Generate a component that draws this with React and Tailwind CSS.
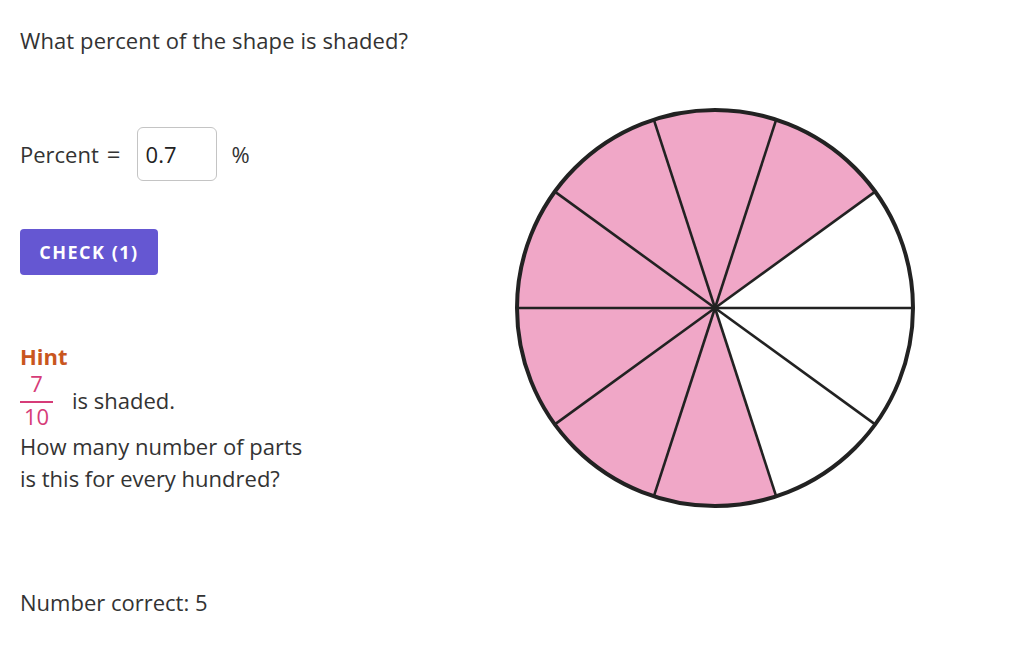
import React from 'react'

const CX = 202
const CY = 202
const R = 198

function pt(deg) {
  const a = (deg * Math.PI) / 180
  return [CX + R * Math.cos(a), CY - R * Math.sin(a)]
}

function Pie({ parts = 10, shaded = [1, 2, 3, 4, 5, 6, 7] }) {
  const step = 360 / parts
  return (
    <svg width="404" height="404" viewBox="0 0 404 404">
      {shaded.map(i => {
        const [x1, y1] = pt(i * step)
        const [x2, y2] = pt((i + 1) * step)
        return (
          <path
            key={i}
            d={`M${CX} ${CY} L${x1} ${y1} A${R} ${R} 0 0 0 ${x2} ${y2} Z`}
            fill="#f0a7c7"
          />
        )
      })}
      {Array.from({ length: parts }).map((_, i) => {
        const [x, y] = pt(i * step)
        return <line key={i} x1={CX} y1={CY} x2={x} y2={y} stroke="#222" strokeWidth="2.6" />
      })}
      <circle cx={CX} cy={CY} r={R} fill="none" stroke="#222" strokeWidth="4" />
    </svg>
  )
}

export default function App() {
  return (
    <div
      className="w-[1032px] h-[645px] bg-white flex text-[#333] text-[22px]"
      style={{ fontFamily: '"Open Sans", "Liberation Sans", sans-serif' }}
    >
      {/* ── Question column ───────────── */}
      <div className="w-[513px] pl-5 flex flex-col">
        <div className="mt-[26px] h-7 leading-7 tracking-[0.1px]">What percent of the shape is shaded?</div>

        <div className="mt-[73px] flex items-center h-[54px]">
          <span>Percent</span>
          <span className="ml-[8px] text-[24px]">=</span>
          <div className="ml-[16px] w-[80px] h-[54px] border border-[#c4c4c4] rounded-[6px] flex items-center px-[8px] text-[#222]">
            0.7
          </div>
          <span className="ml-[15px]">%</span>
        </div>

        <button className="mt-[48px] w-[138px] h-[46px] rounded-[4px] bg-[#6557d2] text-white text-[18px] font-bold tracking-[1.5px]">
          CHECK (1)
        </button>

        <div className="mt-[69px] text-[#c9561e] font-bold leading-6">Hint</div>
        <div className="flex items-center">
          <div className="flex flex-col items-center text-[#d63c78] w-[33px] leading-[22px] text-[22px]">
            <span className="mt-[4px]">7</span>
            <span className="w-full h-[1.5px] bg-[#d63c78] mt-[7px] mb-[2px]" />
            <span>10</span>
          </div>
          <span className="ml-[19px] mt-[6px]">is shaded.</span>
        </div>
        <div className="mt-[3px] leading-8">
          How many number of parts
          <br />
          is this for every hundred?
        </div>

        <div className="mt-[94px] leading-7">Number correct: 5</div>
      </div>

      {/* ── Pie ───────────── */}
      <div className="pt-[106px]">
        <Pie />
      </div>
    </div>
  )
}
